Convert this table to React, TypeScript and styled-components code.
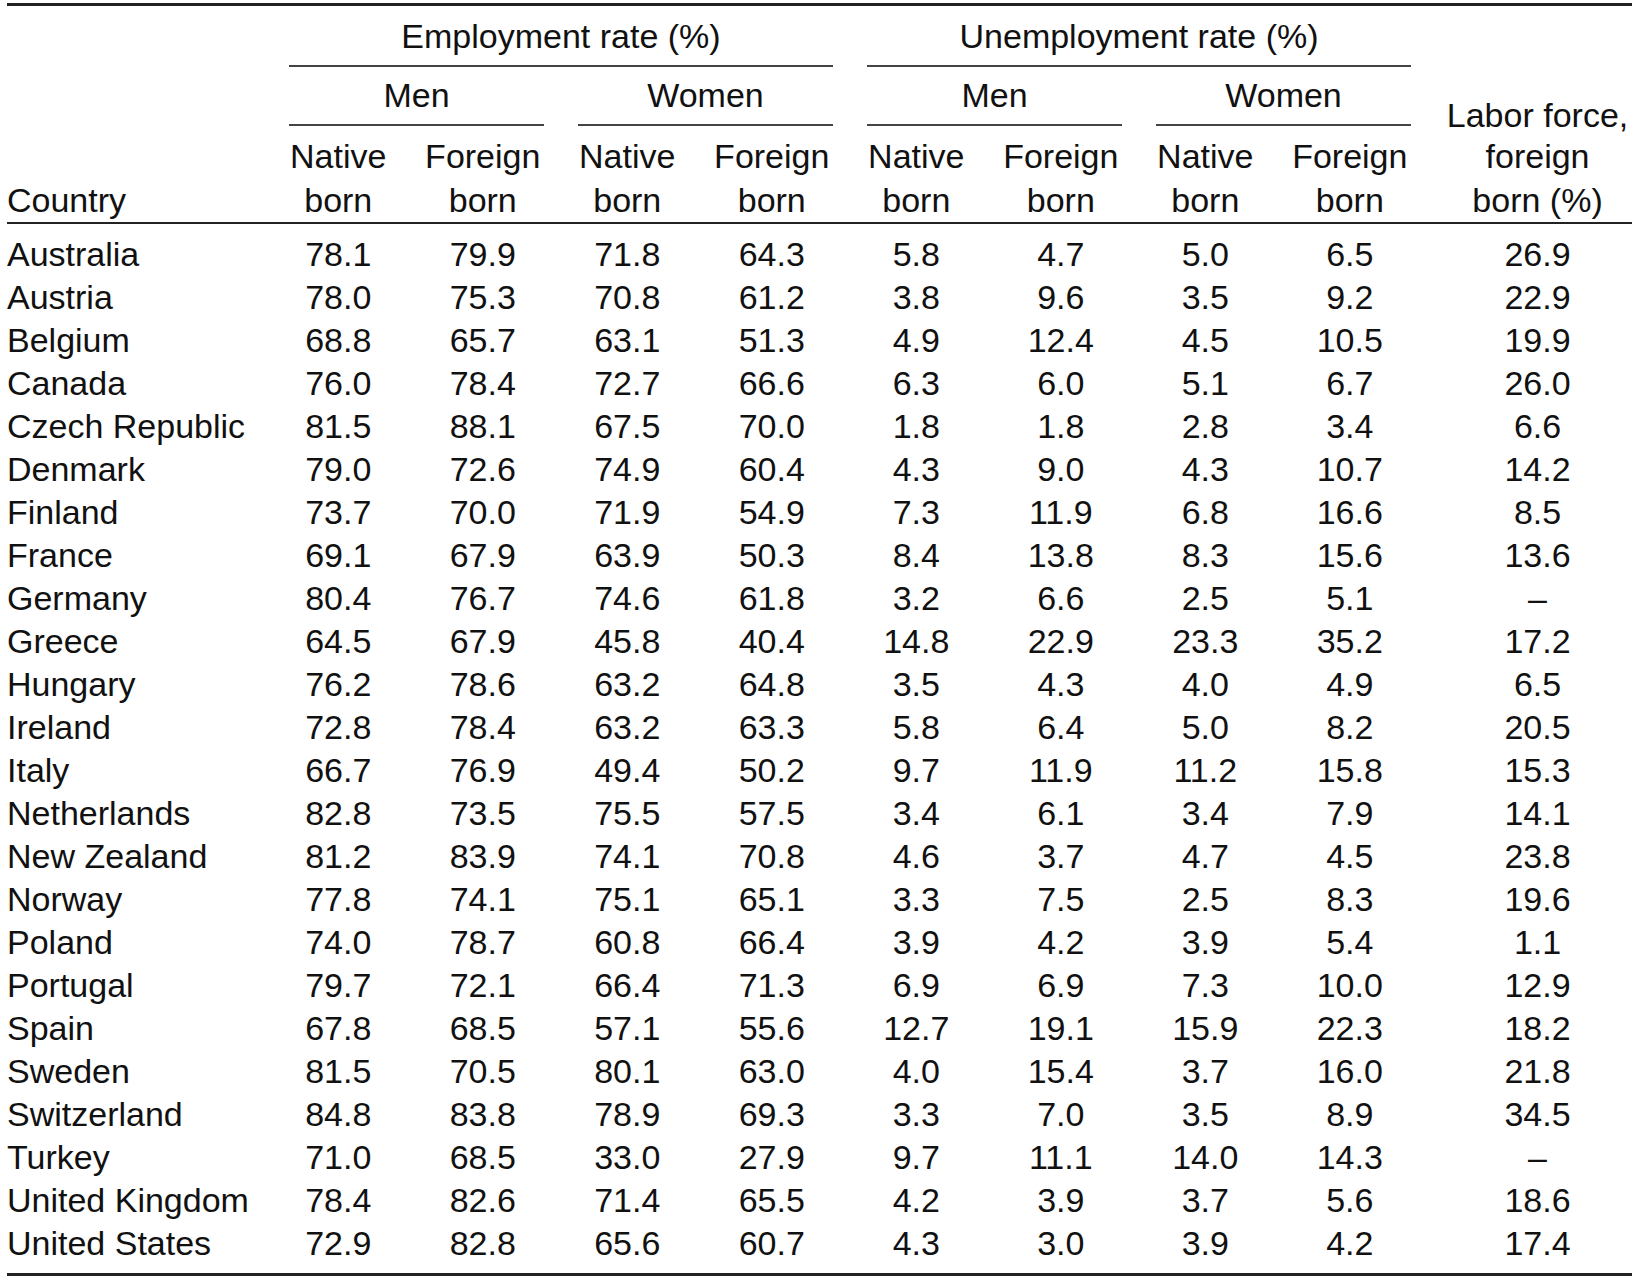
import React from 'react';
import styled, { createGlobalStyle } from 'styled-components';

const GlobalStyle = createGlobalStyle`
  body {
    margin: 3px 8px 0 7px;
    background: #fff;
    color: #111;
    font-family: 'Liberation Sans', Arial, Helvetica, sans-serif;
  }
`;

const Table = styled.table`
  width: 1625px;
  table-layout: fixed;
  border-collapse: separate;
  border-spacing: 0;
  border-top: 3px solid #222;
  border-bottom: 3px solid #222;
  font-size: 34px;
`;

const HeadCell = styled.th<{ $align?: 'left' | 'center'; $padLeft?: number; $padRight?: number }>`
  font-weight: normal;
  text-align: ${(p) => p.$align || 'center'};
  padding: 0 ${(p) => p.$padRight || 0}px 0 ${(p) => p.$padLeft || 0}px;
  vertical-align: bottom;
  white-space: nowrap;
`;

const GroupLabel = styled.div<{ $top: number; $bottom: number }>`
  margin: 0 17px;
  padding: ${(p) => p.$top}px 0 ${(p) => p.$bottom}px;
  line-height: 43px;
  border-bottom: 2px solid #444;
  text-align: center;
`;

const BottomHeadCell = styled(HeadCell)`
  border-bottom: 2px solid #222;
  line-height: 44px;
`;

const SubLabel = styled.div`
  padding-top: 7.5px;
`;

const TightLine = styled.div`
  line-height: 38px;
`;

const Row = styled.tr`
  &:first-child td {
    padding-top: 9px;
  }
  &:last-child td {
    padding-bottom: 8px;
  }
`;

const Cell = styled.td<{ $kind: 'name' | 'num' | 'share' }>`
  padding: 0;
  line-height: 43px;
  white-space: nowrap;
  text-align: ${(p) => (p.$kind === 'name' ? 'left' : 'center')};
  padding-left: ${(p) => (p.$kind === 'share' ? 15 : 0)}px;
  padding-right: ${(p) => (p.$kind === 'num' ? 12 : 0)}px;
`;

const rows: [string, string[]][] = [
  ['Australia', ['78.1', '79.9', '71.8', '64.3', '5.8', '4.7', '5.0', '6.5', '26.9']],
  ['Austria', ['78.0', '75.3', '70.8', '61.2', '3.8', '9.6', '3.5', '9.2', '22.9']],
  ['Belgium', ['68.8', '65.7', '63.1', '51.3', '4.9', '12.4', '4.5', '10.5', '19.9']],
  ['Canada', ['76.0', '78.4', '72.7', '66.6', '6.3', '6.0', '5.1', '6.7', '26.0']],
  ['Czech Republic', ['81.5', '88.1', '67.5', '70.0', '1.8', '1.8', '2.8', '3.4', '6.6']],
  ['Denmark', ['79.0', '72.6', '74.9', '60.4', '4.3', '9.0', '4.3', '10.7', '14.2']],
  ['Finland', ['73.7', '70.0', '71.9', '54.9', '7.3', '11.9', '6.8', '16.6', '8.5']],
  ['France', ['69.1', '67.9', '63.9', '50.3', '8.4', '13.8', '8.3', '15.6', '13.6']],
  ['Germany', ['80.4', '76.7', '74.6', '61.8', '3.2', '6.6', '2.5', '5.1', '–']],
  ['Greece', ['64.5', '67.9', '45.8', '40.4', '14.8', '22.9', '23.3', '35.2', '17.2']],
  ['Hungary', ['76.2', '78.6', '63.2', '64.8', '3.5', '4.3', '4.0', '4.9', '6.5']],
  ['Ireland', ['72.8', '78.4', '63.2', '63.3', '5.8', '6.4', '5.0', '8.2', '20.5']],
  ['Italy', ['66.7', '76.9', '49.4', '50.2', '9.7', '11.9', '11.2', '15.8', '15.3']],
  ['Netherlands', ['82.8', '73.5', '75.5', '57.5', '3.4', '6.1', '3.4', '7.9', '14.1']],
  ['New Zealand', ['81.2', '83.9', '74.1', '70.8', '4.6', '3.7', '4.7', '4.5', '23.8']],
  ['Norway', ['77.8', '74.1', '75.1', '65.1', '3.3', '7.5', '2.5', '8.3', '19.6']],
  ['Poland', ['74.0', '78.7', '60.8', '66.4', '3.9', '4.2', '3.9', '5.4', '1.1']],
  ['Portugal', ['79.7', '72.1', '66.4', '71.3', '6.9', '6.9', '7.3', '10.0', '12.9']],
  ['Spain', ['67.8', '68.5', '57.1', '55.6', '12.7', '19.1', '15.9', '22.3', '18.2']],
  ['Sweden', ['81.5', '70.5', '80.1', '63.0', '4.0', '15.4', '3.7', '16.0', '21.8']],
  ['Switzerland', ['84.8', '83.8', '78.9', '69.3', '3.3', '7.0', '3.5', '8.9', '34.5']],
  ['Turkey', ['71.0', '68.5', '33.0', '27.9', '9.7', '11.1', '14.0', '14.3', '–']],
  ['United Kingdom', ['78.4', '82.6', '71.4', '65.5', '4.2', '3.9', '3.7', '5.6', '18.6']],
  ['United States', ['72.9', '82.8', '65.6', '60.7', '4.3', '3.0', '3.9', '4.2', '17.4']],
];

const subCols = [0, 1, 2, 3, 4, 5, 6, 7];

export default function App() {
  return (
    <>
      <GlobalStyle />
      <Table>
        <colgroup>
          <col style={{ width: 265 }} />
          {subCols.map((i) => (
            <col key={i} style={{ width: 144.5 }} />
          ))}
          <col style={{ width: 204 }} />
        </colgroup>
        <thead>
          <tr>
            <BottomHeadCell rowSpan={3} $align="left">
              Country
            </BottomHeadCell>
            <HeadCell colSpan={4}>
              <GroupLabel $top={9} $bottom={7}>Employment rate (%)</GroupLabel>
            </HeadCell>
            <HeadCell colSpan={4}>
              <GroupLabel $top={9} $bottom={7}>Unemployment rate (%)</GroupLabel>
            </HeadCell>
            <BottomHeadCell rowSpan={3} $padLeft={15}>
              <TightLine>Labor force,</TightLine>
              foreign
              <br />
              born (%)
            </BottomHeadCell>
          </tr>
          <tr>
            {['Men', 'Women', 'Men', 'Women'].map((x, i) => (
              <HeadCell key={i} colSpan={2}>
                <GroupLabel $top={6.5} $bottom={7.5}>{x}</GroupLabel>
              </HeadCell>
            ))}
          </tr>
          <tr>
            {subCols.map((i) => (
              <BottomHeadCell key={i} $padRight={12}>
                <SubLabel>
                  {i % 2 == 0 ? 'Native' : 'Foreign'}
                  <br />
                  born
                </SubLabel>
              </BottomHeadCell>
            ))}
          </tr>
        </thead>
        <tbody>
          {rows.map(([country, values]) => (
            <Row key={country}>
              <Cell $kind="name">{country}</Cell>
              {values.map((v, i) => (
                <Cell key={i} $kind={i == 8 ? 'share' : 'num'}>
                  {v}
                </Cell>
              ))}
            </Row>
          ))}
        </tbody>
      </Table>
    </>
  );
}
